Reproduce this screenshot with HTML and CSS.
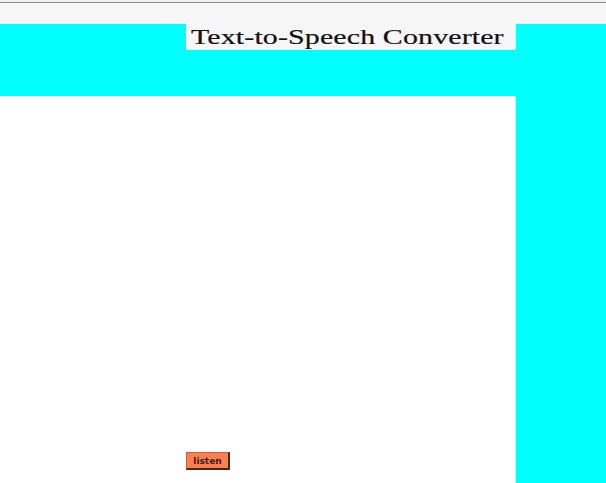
FILE: index.html
```html
<!DOCTYPE html>
<html>
<head>
<meta charset="utf-8">
<link rel="stylesheet" href="styles.css">
</head>
<body>
<div class="chrome"></div>
<div class="strip"></div>
<div class="page">
  <div class="header">
    <h1 class="title"><span class="title-text">Text-to-Speech Converter</span></h1>
  </div>
  <div class="main">
    <div class="content">
      <button class="listen">listen</button>
    </div>
    <div class="side"></div>
  </div>
</div>
</body>
</html>
```
FILE: styles.css
```css
html, body {
  margin: 0;
  padding: 0;
  background: #fafafa;
  overflow: hidden;
}
.chrome {
  height: 2px;
  background: #f2f2f2;
  border-bottom: 1px solid #8a8a8a;
}
.strip {
  height: 21px;
  background: #f7f7f7;
}
.page {
  display: flex;
  flex-direction: column;
  height: 459px;
}
.header {
  background: #00ffff;
  height: 72px;
  padding-left: 186px;
}
.title {
  margin: 0;
  width: 330px;
  height: 26px;
  background: #f6f6f6;
  font-family: "Liberation Serif", serif;
  font-weight: normal;
  font-size: 22px;
  line-height: 26px;
  color: #111111;
  padding-left: 5px;
  box-sizing: border-box;
}
.title-text {
  display: inline-block;
  transform: scaleX(1.36);
  transform-origin: left center;
  letter-spacing: 0.1px;
  -webkit-text-stroke: 0.2px #111111;
}
.main {
  display: flex;
  flex: 1;
}
.content {
  width: 516px;
  background: #ffffff;
  padding-top: 356px;
  padding-left: 186px;
  box-sizing: border-box;
}
.side {
  flex: 1;
  background: #00ffff;
}
.listen {
  display: block;
  width: 44px;
  height: 18px;
  padding: 0;
  margin: 0;
  background: #ff7f50;
  border: 1px solid #c06040;
  border-right: 2px solid #4a2818;
  border-bottom: 2px solid #4a2818;
  font-family: "DejaVu Sans", sans-serif;
  font-weight: bold;
  font-size: 9px;
  color: #3a2018;
  line-height: 14px;
}
```
